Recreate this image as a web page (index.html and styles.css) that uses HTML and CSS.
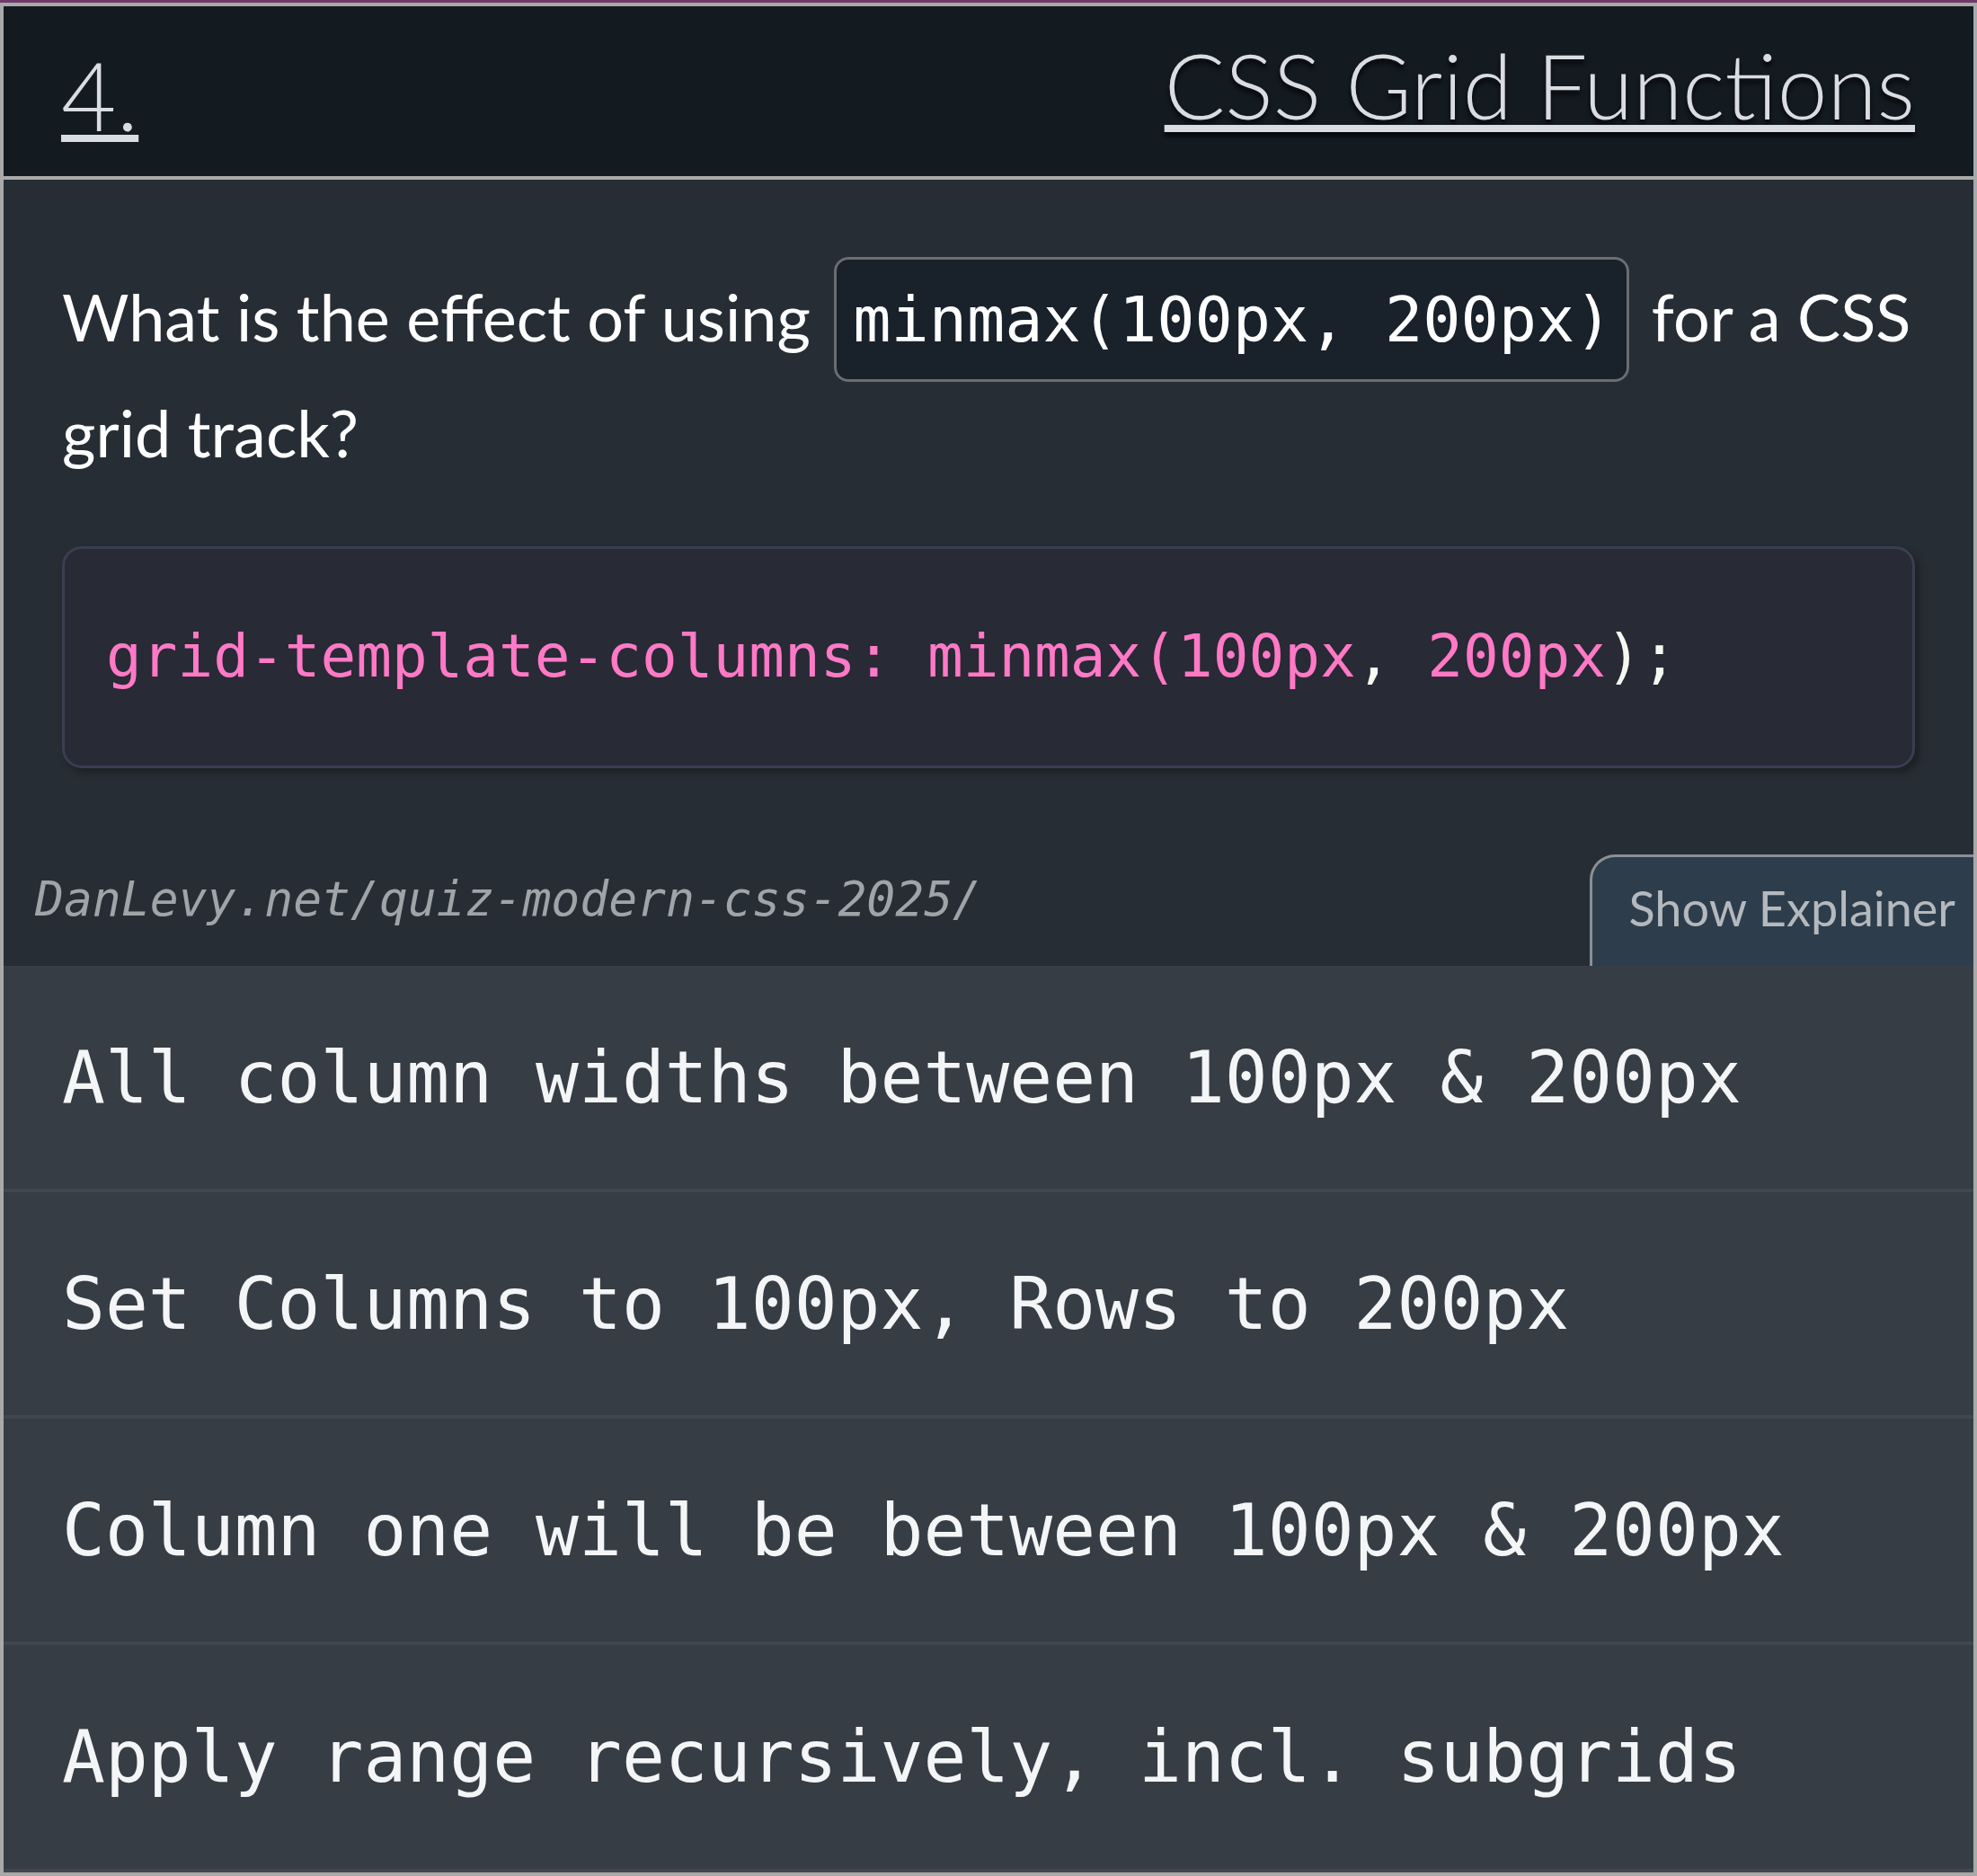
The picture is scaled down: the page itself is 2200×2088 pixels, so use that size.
FILE: index.html
```html
<!DOCTYPE html>
<html lang="en">
<head>
<meta charset="utf-8">
<title>CSS Grid Functions</title>
<link rel="stylesheet" href="styles.css">
</head>
<body>
<article class="card">
  <header class="card-head">
    <span class="q-num">4.</span>
    <h1 class="q-title">CSS Grid Functions</h1>
  </header>
  <section class="card-body">
    <p class="question">What is the effect of using <code class="inline-code">minmax(100px, 200px)</code> for a CSS grid track?</p>
    <pre class="code-block"><code><span class="tk-p">grid-template-columns: minmax(100px</span><span class="tk-w">,</span> <span class="tk-p">200px</span><span class="tk-w">);</span></code></pre>
    <div class="card-foot">
      <span class="source">DanLevy.net/quiz-modern-css-2025/</span>
      <button class="explain-btn" type="button">Show Explainer</button>
    </div>
  </section>
  <ul class="answers">
    <li class="answer">All column widths between 100px &amp; 200px</li>
    <li class="answer">Set Columns to 100px, Rows to 200px</li>
    <li class="answer">Column one will be between 100px &amp; 200px</li>
    <li class="answer">Apply range recursively, incl. subgrids</li>
  </ul>
</article>
</body>
</html>
```
FILE: styles.css
```css
html, body {
  margin: 0;
  padding: 0;
}
body {
  background: #6e3b69;
  padding-top: 3px;
  font-family: "Lato", "Open Sans", sans-serif;
}
.card {
  box-sizing: border-box;
  width: 2200px;
  height: 2085px;
  border: 4px solid #a9a9a9;
  background: #272d34;
  display: flex;
  flex-direction: column;
}
.card-head {
  box-sizing: border-box;
  height: 193px;
  background: #131a20;
  border-bottom: 4px solid #a9a9a9;
  display: flex;
  justify-content: space-between;
  align-items: flex-start;
  padding: 0 65px 0 64px;
}
.q-num {
  font-size: 106px;
  font-weight: 300;
  color: #d9dce0;
  text-decoration: underline;
  text-decoration-thickness: 8px;
  text-underline-offset: 4px;
  line-height: 1;
  margin-top: 45px;
}
.q-title {
  margin: 0;
  font-size: 100px;
  font-weight: 300;
  color: #d9dce0;
  line-height: 1;
  margin-top: 37px;
  text-decoration: underline;
  text-decoration-thickness: 8px;
  text-underline-offset: 6px;
  text-shadow: 0 5px 5px rgba(0, 0, 0, 0.7);
}
.card-body {
  padding: 90px 65px 0 65px;
  display: flex;
  flex-direction: column;
}
.question {
  margin: 0;
  font-size: 72px;
  font-weight: 400;
  line-height: 125px;
  color: #ffffff;
}
.inline-code {
  font-family: "DejaVu Sans Mono", monospace;
  font-size: 70.2px;
  background: #19212a;
  border: 3px solid #6a6d72;
  border-radius: 16px;
  padding: 26px 16px 25px 18px;
  margin: 0 6px 0 8px;
}
.code-block {
  margin: 64px 0 0 0;
  background: #282a36;
  border: 3px solid #3b3e51;
  border-radius: 22px;
  padding: 81px 46px 83px 46px;
  font-family: "DejaVu Sans Mono", monospace;
  font-size: 66px;
  line-height: normal;
  box-shadow: 5px 5px 8px rgba(0, 0, 0, 0.3);
}
.code-block code {
  font-family: inherit;
}
.tk-p { color: #ff79c6; }
.tk-w { color: #f8f8f2; }
.card-foot {
  margin: 96px -65px 0 -30px;
  display: flex;
  justify-content: space-between;
  align-items: flex-end;
}
.source {
  font-family: "DejaVu Sans Mono", monospace;
  font-style: italic;
  font-size: 53px;
  color: #9fa4a9;
  padding-bottom: 44px;
}
.explain-btn {
  font-family: "Lato", "Open Sans", sans-serif;
  font-size: 54px;
  color: #b4b9bf;
  background: #2e3d4b;
  border: 3px solid #8a9096;
  border-right: 0;
  border-bottom: 0;
  border-radius: 28px 0 0 0;
  padding: 24px 20px 32px 40px;
  line-height: normal;
  cursor: pointer;
}
.answers {
  list-style: none;
  margin: 0;
  padding: 0;
  flex: 1;
  display: flex;
  flex-direction: column;
  background: #373d45;
}
.answer {
  box-sizing: border-box;
  height: 252px;
  border-bottom: 4px solid #41474f;
  display: flex;
  align-items: center;
  padding: 0 65px;
  font-family: "DejaVu Sans Mono", monospace;
  font-size: 79.6px;
  color: #f4f5f6;
  white-space: pre;
}
.answer:last-child {
  flex: 1;
}
```
